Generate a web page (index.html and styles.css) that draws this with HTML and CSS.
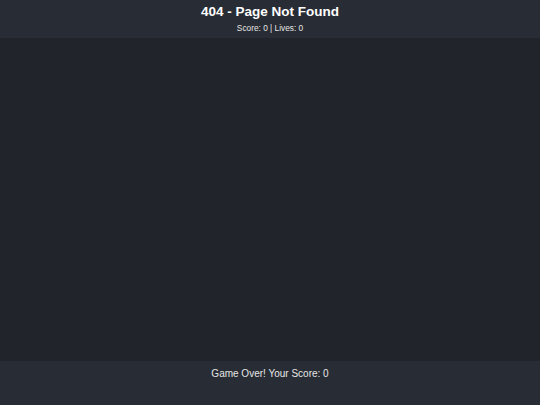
FILE: index.html
```html
<!DOCTYPE html>
<html>
<head>
<meta charset="utf-8">
<link rel="stylesheet" href="styles.css">
</head>
<body>
<div class="app">
  <header class="header">
    <h1 class="title">404 - Page Not Found</h1>
    <div class="stats">Score: 0 | Lives: 0</div>
  </header>
  <main class="board"></main>
  <footer class="footer">
    <div class="message">Game Over! Your Score: 0</div>
  </footer>
</div>
</body>
</html>
```
FILE: styles.css
```css
html, body {
  margin: 0;
  padding: 0;
  height: 100%;
}
body {
  background: #21252b;
  color: #ffffff;
  font-family: "Liberation Sans", Arial, sans-serif;
}
.app {
  display: flex;
  flex-direction: column;
  height: 405px;
}
.header {
  background: #282c34;
  height: 38px;
  box-sizing: border-box;
  padding-top: 3px;
  text-align: center;
}
.title {
  margin: 0;
  font-size: 13.5px;
  line-height: 18px;
  font-weight: bold;
}
.stats {
  font-size: 8.3px;
  line-height: 12px;
  margin-top: 1px;
  color: #e6e6e6;
}
.board {
  flex: 1;
  background: #21252b;
}
.footer {
  background: #282c34;
  height: 44px;
  box-sizing: border-box;
  padding-top: 6px;
  text-align: center;
}
.message {
  font-size: 10px;
  line-height: 14px;
  color: #e6e6e6;
}
```
